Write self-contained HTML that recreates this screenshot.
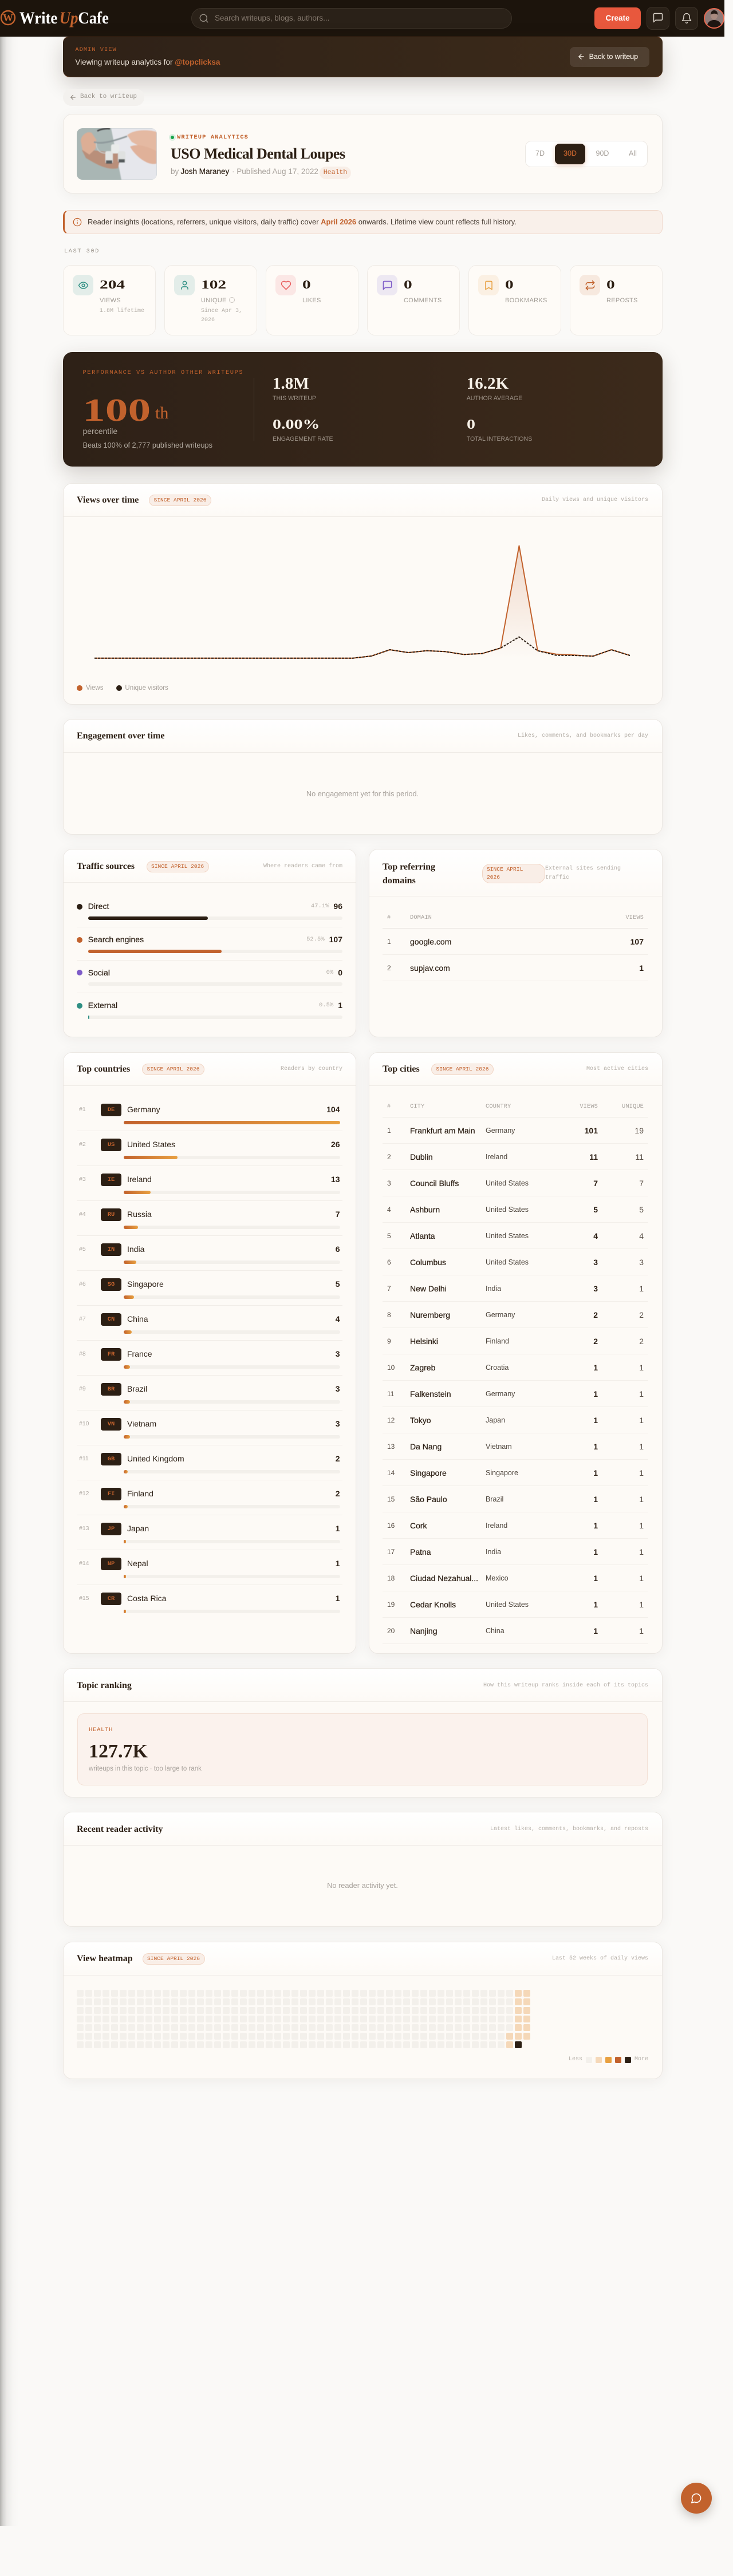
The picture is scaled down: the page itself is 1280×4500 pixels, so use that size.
<!DOCTYPE html>
<html lang="en"><head><meta charset="utf-8"><title>Writeup analytics</title>
<style>
*{box-sizing:border-box}
html,body{margin:0;padding:0;background:#faf9f7}
body{width:1280px;height:4500px;overflow:hidden;font-family:"Liberation Sans",sans-serif;color:#2c1f14}
#p{position:relative;width:1280px;height:4500px;overflow:hidden;background:#faf9f7}
.t{position:absolute;white-space:nowrap;line-height:20px}
.m{font-family:"Liberation Mono",monospace}
.s{font-family:"Liberation Serif",serif}
.abs{position:absolute}
.card{position:absolute;background:#fdfaf6;border:1px solid #ebe7e2;border-radius:16px;box-shadow:0 4px 24px rgba(44,31,20,.06);overflow:hidden}
.hd{position:absolute;left:0;right:0;top:0;height:58px;border-bottom:1px solid #efebe6;background:linear-gradient(#fff,#fdfaf6)}
.ti{position:absolute;white-space:nowrap;line-height:20px;font:700 16px/20px "Liberation Serif",serif;color:#2c1f14}
.bd{position:absolute;height:20px;width:109px;border:1px solid #f1d5c4;background:#f9eee7;border-radius:10px;color:#c2622d;font:9.6px/18px "Liberation Mono",monospace;text-align:center;white-space:nowrap}
.su{position:absolute;white-space:nowrap;font:10px/20px "Liberation Mono",monospace;color:#b5afa8}
.st{position:absolute;top:463px;width:162px;height:123px;background:#fefbf7;border:1px solid #efebe6;border-radius:14px}
.ib{position:absolute;left:16px;top:16px;width:36px;height:36px;border-radius:10px;display:flex;align-items:center;justify-content:center}
.n{position:absolute;left:63px;top:21px;font:700 21px/24px "Liberation Serif",serif;transform:scaleX(1.4);transform-origin:left;color:#2c1f14}
.l{position:absolute;left:63px;top:51px;font:11px/20px "Liberation Sans",sans-serif;letter-spacing:.3px;color:#a39d96;white-space:nowrap}
.x{position:absolute;left:63px;top:72px;font:10px/16px "Liberation Mono",monospace;color:#b5afa8}
.big{font:700 24px/30px "Liberation Serif",serif;color:#f7f1e8;transform-origin:left}
.cap{font-size:10.6px;color:#9c9186}
.tr{position:absolute;left:134px;width:464px}
.bar{position:absolute;left:153.8px;width:444.2px;height:6px;border-radius:3px;background:#f3f0eb}
.bar i{display:block;height:6px;border-radius:3px}
.dot{position:absolute;left:134px;width:10px;height:10px;border-radius:50%}
.sep{position:absolute;left:134px;width:464px;height:1px;background:#f1ede8}
.rv{position:absolute;right:682px;display:flex;gap:8px;align-items:center;line-height:20px;white-space:nowrap}
.rv span{font:10.5px "Liberation Mono",monospace;color:#b5afa8}
.rv b{font-size:14px;color:#2c1f14}
.nm{position:absolute;left:153.8px;font-size:14px;line-height:20px;-webkit-text-stroke:.2px #2c1f14}
table{position:absolute;border-collapse:separate;border-spacing:0;table-layout:fixed;font-size:14px}
th{font:400 10.4px "Liberation Mono",monospace;color:#a8a29c;text-align:left;padding:0 8px;border-bottom:1px solid #e6e2dd;height:37px;letter-spacing:.1px}
td{padding:0 8px;height:46px;border-bottom:1px solid #f3efea;white-space:nowrap;overflow:hidden}
.r{text-align:right}
.i{font-size:12px;color:#5a5047}
.c{-webkit-text-stroke:.25px #2c1f14}
.o{font-size:12.5px;color:#4f463d}
.u{color:#5a5047}
#cr{position:absolute;left:134px;top:1915.3px;width:463.5px}
#cr>div{position:relative;height:61px;border-bottom:1px solid #f1ede8}
#cr u{position:absolute;left:4px;top:13px;font:10.5px/20px "Liberation Sans",sans-serif;color:#b0aaa4;text-decoration:none}
#cr em{position:absolute;left:42px;top:13px;width:36px;height:22px;background:#2c1f14;border-radius:4px;color:#c2622d;font:normal 700 10.5px/22px "Liberation Mono",monospace;text-align:center}
#cr span{position:absolute;left:88px;top:13px;font-size:14px;line-height:20px}
#cr b{position:absolute;right:4px;top:13px;font-size:14px;line-height:20px}
#cr s{position:absolute;left:82px;right:4px;top:43px;height:6px;border-radius:3px;background:#f3f0eb;text-decoration:none;display:block}
#cr s i{display:block;height:6px;border-radius:3px;background:linear-gradient(90deg,#c2622d,#e8a040)}
</style></head><body><div id="p">

<div class="abs" style="left:0;top:64px;width:34px;height:4349px;background:linear-gradient(90deg,rgba(60,58,55,.38) 0,rgba(60,58,55,.2) 5px,rgba(60,58,55,.08) 12px,rgba(60,58,55,.02) 22px,rgba(60,58,55,0) 32px)"></div>

<!-- top bar -->
<div class="abs" style="left:0;top:0;width:1265px;height:64px;background:#1c140c"></div>
<svg class="abs" style="left:0;top:17px" width="29" height="28" viewBox="0 0 29 28"><circle cx="14" cy="14" r="12" fill="none" stroke="#c2622d" stroke-width="2.4"/><text x="14" y="20" text-anchor="middle" font-family="Liberation Serif" font-weight="700" font-size="18" fill="#c2622d">W</text></svg>
<div class="t s" style="left:34px;top:14px;line-height:36px;font-size:30px;font-weight:700;color:#fff;transform:scaleX(.89);transform-origin:left">Write<span style="font-style:italic;color:#c2622d;margin-left:4px">Up</span>Cafe</div>
<div class="abs" style="left:334px;top:14px;width:560px;height:36px;border-radius:18px;background:#2a2118;border:1px solid #3b3228"></div>
<svg class="abs" style="left:347px;top:23px" width="18" height="18" viewBox="0 0 24 24" fill="none" stroke="#9b9389" stroke-width="1.8" stroke-linecap="round"><circle cx="11" cy="11" r="8"/><path d="m21 21-4.3-4.3"/></svg>
<div class="t" style="left:375px;top:22px;font-size:13.5px;color:#85796e">Search writeups, blogs, authors...</div>
<div class="abs" style="left:1038px;top:13px;width:81px;height:38px;border-radius:9px;background:#e8583d;color:#fff;font-weight:700;font-size:13.5px;line-height:37px;text-align:center">Create</div>
<div class="abs" style="left:1129px;top:12px;width:40px;height:40px;border-radius:10px;background:#2a2118;border:1px solid #3b3228"></div>
<svg class="abs" style="left:1139px;top:21px" width="20" height="20" viewBox="0 0 24 24" fill="none" stroke="#d9d2c9" stroke-width="1.8" stroke-linejoin="round"><path d="M21 15a2 2 0 0 1-2 2H7l-4 4V5a2 2 0 0 1 2-2h14a2 2 0 0 1 2 2z"/></svg>
<div class="abs" style="left:1179px;top:12px;width:40px;height:40px;border-radius:10px;background:#2a2118;border:1px solid #3b3228"></div>
<svg class="abs" style="left:1189px;top:22px" width="20" height="20" viewBox="0 0 24 24" fill="none" stroke="#d9d2c9" stroke-width="1.8" stroke-linecap="round" stroke-linejoin="round"><path d="M6 8a6 6 0 0 1 12 0c0 7 3 9 3 9H3s3-2 3-9"/><path d="M10.3 21a1.94 1.94 0 0 0 3.4 0"/></svg>
<svg class="abs" style="left:1229px;top:14px" width="36" height="36" viewBox="0 0 36 36"><circle cx="18" cy="18" r="17" fill="#8f7b78"/><path d="M5 34c1-10 7-13 13-13s12 3 14 13z" fill="#1e1512"/><ellipse cx="18" cy="13" rx="6" ry="7" fill="#a98a80"/><path d="M12 12c0-6 3-8 6-8s7 2 6 8c-2-3-9-3-12 0z" fill="#241915"/><circle cx="18" cy="18" r="17" fill="none" stroke="#e8684f" stroke-width="2"/></svg>

<!-- admin banner -->
<div class="abs" style="left:110px;top:64px;width:1047px;height:71px;border-radius:0 0 12px 12px;border-top-left-radius:10px;border-top-right-radius:10px;background:linear-gradient(90deg,#2e2117,#3d2b1a);border:1px solid #6b3c1f;border-width:1px 0;box-shadow:0 12px 36px rgba(44,31,20,.2)"></div>
<div class="t m" style="left:131.4px;top:77px;font-size:10.4px;letter-spacing:1px;color:#c2622d">ADMIN VIEW</div>
<div class="t" style="left:131.4px;top:99px;font-size:13.5px;color:#e8dfd4">Viewing writeup analytics for <b style="color:#c2622d">@topclicksa</b></div>
<div class="abs" style="left:995px;top:82px;width:139px;height:35px;border-radius:8px;background:rgba(255,255,255,.1)"></div>
<svg class="abs" style="left:1008px;top:92px" width="14" height="14" viewBox="0 0 24 24" fill="none" stroke="#f0e8dd" stroke-width="2.4" stroke-linecap="round" stroke-linejoin="round"><path d="m12 19-7-7 7-7"/><path d="M19 12H5"/></svg>
<div class="t" style="left:1028.6px;top:89px;font-size:12.5px;color:#f0e8dd;-webkit-text-stroke:.2px #f0e8dd">Back to writeup</div>

<!-- back pill -->
<div class="abs" style="left:110px;top:155px;width:142px;height:30px;border-radius:15px;background:#f3f1ee"></div>
<svg class="abs" style="left:121px;top:163px" width="13" height="14" viewBox="0 0 24 24" fill="none" stroke="#8f8880" stroke-width="2.2" stroke-linecap="round" stroke-linejoin="round"><path d="m12 19-7-7 7-7"/><path d="M19 12H5"/></svg>
<div class="t m" style="left:140px;top:159px;font-size:11px;color:#9e9890">Back to writeup</div>

<!-- hero -->
<div class="abs" style="left:110px;top:199px;width:1047px;height:139px;background:#fdfaf6;border:1px solid #ebe7e2;border-radius:16px;box-shadow:0 4px 24px rgba(44,31,20,.05)"></div>
<svg class="abs" style="left:134px;top:224px;border-radius:10px" width="140" height="90" viewBox="0 0 140 90">
<defs><filter id="bl"><feGaussianBlur stdDeviation=".7"/></filter></defs>
<rect width="140" height="90" fill="#a9b6b4"/>
<g filter="url(#bl)">
<path d="M60 0H140V90H78Z" fill="#e6e7ec"/>
<path d="M9 38C22 36 50 42 78 44L72 70C50 74 30 60 16 52Z" fill="#b98f7a"/>
<path d="M7 22C8 12 18 4 26 8L34 20 33 36 22 46 10 38Z" fill="#dcae95"/>
<path d="M88 12C100 2 122 2 139 6V42L118 36 96 24Z" fill="#e4b9a2"/>
<path d="M93 32C105 26 125 32 139 40V62C122 66 100 46 93 32Z" fill="#e0b199"/>
<path d="M30 24C42 28 60 24 88 14" fill="none" stroke="#8f9a9c" stroke-width="3"/>
<path d="M36 5C40 2 50 0 58 1" fill="none" stroke="#3c3d40" stroke-width="2.5"/>
<path d="M34 26C34 42 46 46 58 42" fill="none" stroke="#c9d0d0" stroke-width="1.5"/>
<rect x="60" y="28" width="14" height="16" rx="3" fill="#e9ebea"/>
<rect x="50" y="40" width="13" height="22" rx="3" fill="#e3e5e4"/>
<rect x="72" y="40" width="13" height="20" rx="3" fill="#dfe1e0"/>
<rect x="51" y="56" width="11" height="6" fill="#555a5c"/>
<rect x="73" y="54" width="11" height="6" fill="#555a5c"/>
</g></svg>
<div class="abs" style="left:295px;top:234px;width:12px;height:12px;border-radius:50%;background:#dcefe0"></div>
<div class="abs" style="left:298px;top:237px;width:6px;height:6px;border-radius:50%;background:#16a34a"></div>
<div class="t m" style="left:309px;top:230px;font-size:10.4px;letter-spacing:1.12px;font-weight:700;color:#c2622d">WRITEUP ANALYTICS</div>
<div class="t s" style="left:298px;top:254px;line-height:30px;font-size:26px;font-weight:700;letter-spacing:-.5px;color:#2c1f14">USO Medical Dental Loupes</div>
<div class="t" style="left:298px;top:290px;font-size:13.5px;color:#a8a29c">by</div>
<div class="t" style="left:315.5px;top:290px;font-size:13.5px;color:#2c1f14;-webkit-text-stroke:.2px #2c1f14">Josh Maraney</div>
<div class="t" style="left:405px;top:290px;font-size:13.5px;color:#a8a29c">· Published Aug 17, 2022 ·</div>
<div class="abs m" style="left:558px;top:291px;width:55px;height:22px;border-radius:11px;background:#f8eee7;color:#c2622d;font-size:11.5px;line-height:22px;text-align:center">Health</div>

<div class="abs" style="left:916.7px;top:246px;width:214.3px;height:45.5px;background:#fff;border:1px solid #ece8e3;border-radius:11px"></div>
<div class="abs" style="left:969px;top:251px;width:53px;height:36px;background:#2c1f14;border-radius:8px;box-shadow:0 2px 8px rgba(194,98,45,.3)"></div>
<div class="t" style="left:923px;top:258px;width:40px;text-align:center;font-size:12.5px;color:#a8a29c">7D</div>
<div class="t" style="left:969px;top:258px;width:53px;text-align:center;font-size:12.5px;color:#c2622d;-webkit-text-stroke:.2px #c2622d">30D</div>
<div class="t" style="left:1032px;top:258px;width:40px;text-align:center;font-size:12.5px;color:#a8a29c">90D</div>
<div class="t" style="left:1085px;top:258px;width:40px;text-align:center;font-size:12.5px;color:#a8a29c">All</div>

<!-- notice -->
<div class="abs" style="left:110px;top:367px;width:1047px;height:42px;background:#f9f0ea;border:1px solid #f0d8cb;border-left:3px solid #c2622d;border-radius:10px"></div>
<svg class="abs" style="left:127px;top:380px" width="16" height="16" viewBox="0 0 24 24" fill="none" stroke="#c2622d" stroke-width="1.9" stroke-linecap="round"><circle cx="12" cy="12" r="10"/><path d="M12 16v-4"/><path d="M12 8h.01"/></svg>
<div class="t" style="left:153px;top:378px;font-size:13px;letter-spacing:-.02px;color:#4a3f36">Reader insights (locations, referrers, unique visitors, daily traffic) cover <b style="color:#c2622d">April 2026</b> onwards. Lifetime view count reflects full history.</div>

<div class="t m" style="left:112px;top:429px;font-size:10.4px;letter-spacing:1.5px;color:#a09a92">LAST 30D</div>

<!-- stats -->
<div class="st" style="left:110px"><div class="ib" style="background:#e3ede9"><svg width="19" height="19" viewBox="0 0 24 24" fill="none" stroke="#2f8f83" stroke-width="1.9"><path d="M2 12s3-7 10-7 10 7 10 7-3 7-10 7-10-7-10-7Z"/><circle cx="12" cy="12" r="3"/></svg></div><div class="n">204</div><div class="l">VIEWS</div><div class="x">1.8M lifetime</div></div>
<div class="st" style="left:287px"><div class="ib" style="background:#e3ede9"><svg width="19" height="19" viewBox="0 0 24 24" fill="none" stroke="#2f8f83" stroke-width="1.9"><path d="M19 21v-2a4 4 0 0 0-4-4H9a4 4 0 0 0-4 4v2"/><circle cx="12" cy="7" r="4"/></svg></div><div class="n">102</div><div class="l">UNIQUE <span style="display:inline-block;width:10px;height:10px;border:1px solid #c9c4be;border-radius:50%;vertical-align:-1px;margin-left:1px"></span></div><div class="x">Since Apr 3,<br>2026</div></div>
<div class="st" style="left:464px"><div class="ib" style="background:#fbe7e5"><svg width="19" height="19" viewBox="0 0 24 24" fill="none" stroke="#e85a5a" stroke-width="1.9" stroke-linejoin="round"><path d="M19 14c1.49-1.46 3-3.21 3-5.5A5.5 5.5 0 0 0 16.5 3c-1.76 0-3 .5-4.5 2-1.5-1.5-2.74-2-4.5-2A5.5 5.5 0 0 0 2 8.5c0 2.3 1.5 4.05 3 5.5l7 7Z"/></svg></div><div class="n">0</div><div class="l">LIKES</div></div>
<div class="st" style="left:641px"><div class="ib" style="background:#ede8f2"><svg width="19" height="19" viewBox="0 0 24 24" fill="none" stroke="#7e5cc8" stroke-width="1.9" stroke-linejoin="round"><path d="M21 15a2 2 0 0 1-2 2H7l-4 4V5a2 2 0 0 1 2-2h14a2 2 0 0 1 2 2z"/></svg></div><div class="n">0</div><div class="l">COMMENTS</div></div>
<div class="st" style="left:818px"><div class="ib" style="background:#fbf0e3"><svg width="19" height="19" viewBox="0 0 24 24" fill="none" stroke="#e8a040" stroke-width="1.9" stroke-linejoin="round"><path d="m19 21-7-4-7 4V5a2 2 0 0 1 2-2h10a2 2 0 0 1 2 2v16z"/></svg></div><div class="n">0</div><div class="l">BOOKMARKS</div></div>
<div class="st" style="left:995px"><div class="ib" style="background:#f7e9df"><svg width="19" height="19" viewBox="0 0 24 24" fill="none" stroke="#c2622d" stroke-width="1.9" stroke-linecap="round" stroke-linejoin="round"><path d="m17 2 4 4-4 4"/><path d="M3 11v-1a4 4 0 0 1 4-4h14"/><path d="m7 22-4-4 4-4"/><path d="M21 13v1a4 4 0 0 1-4 4H3"/></svg></div><div class="n">0</div><div class="l">REPOSTS</div></div>

<!-- performance panel -->
<div class="abs" style="left:110px;top:615px;width:1047px;height:200px;border-radius:16px;background:linear-gradient(90deg,#2e2117,#3c2a1b);box-shadow:0 12px 36px rgba(44,31,20,.2)"></div>
<div class="t m" style="left:144.5px;top:641px;font-size:10.4px;letter-spacing:1.56px;color:#c2622d">PERFORMANCE VS AUTHOR OTHER WRITEUPS</div>
<div class="t s" style="left:144px;top:682px;line-height:70px;font-size:56px;font-weight:700;color:#c2622d;transform:scaleX(1.42);transform-origin:left">100</div>
<div class="t s" style="left:271px;top:704px;line-height:36px;font-size:30px;color:#c2622d">th</div>
<div class="t" style="left:144.5px;top:743px;font-size:14px;color:#b3aba1">percentile</div>
<div class="t" style="left:144.5px;top:768px;font-size:12.7px;color:#b3aba1">Beats 100% of 2,777 published writeups</div>
<div class="abs" style="left:443px;top:660px;width:1px;height:110px;background:rgba(255,255,255,.14)"></div>
<div class="t big" style="left:476px;top:655px;font-size:29px">1.8M</div>
<div class="t cap" style="left:476px;top:686px">THIS WRITEUP</div>
<div class="t big" style="left:476px;top:727px;transform:scaleX(1.25)">0.00%</div>
<div class="t cap" style="left:476px;top:757px">ENGAGEMENT RATE</div>
<div class="t big" style="left:814.7px;top:655px;font-size:29px">16.2K</div>
<div class="t cap" style="left:814.7px;top:686px">AUTHOR AVERAGE</div>
<div class="t big" style="left:814.7px;top:727px;transform:scaleX(1.25)">0</div>
<div class="t cap" style="left:814.7px;top:757px">TOTAL INTERACTIONS</div>

<!-- views over time -->
<div class="card" style="left:110px;top:844px;width:1046.5px;height:387px"><div class="hd"></div></div>
<div class="ti" style="left:134px;top:864px">Views over time</div>
<div class="bd" style="left:260px;top:864px">SINCE APRIL 2026</div>
<div class="su" style="right:148px;top:864px">Daily views and unique visitors</div>
<svg class="abs" style="left:110px;top:900px" width="1047" height="280" viewBox="110 900 1047 280">
<defs><linearGradient id="ar" gradientUnits="userSpaceOnUse" x1="0" y1="953" x2="0" y2="1150"><stop offset="0" stop-color="#c2622d" stop-opacity=".22"/><stop offset="1" stop-color="#c2622d" stop-opacity="0"/></linearGradient></defs>
<polygon fill="url(#ar)" points="165,1150 616.4,1149.7 648.6,1146 680.8,1135 713.1,1140 745.3,1136.7 777.6,1138.3 809.8,1143.3 842,1141.7 874.3,1132 906.5,953.3 938.8,1136.7 971,1142.7 1003.2,1144.3 1035.5,1146.3 1067.7,1135 1100,1145 1100,1150"/>
<polyline fill="none" stroke="#c2622d" stroke-width="2" stroke-linejoin="round" points="165,1149.7 616.4,1149.7 648.6,1146 680.8,1135 713.1,1140 745.3,1136.7 777.6,1138.3 809.8,1143.3 842,1141.7 874.3,1132 906.5,953.3 938.8,1136.7 971,1142.7 1003.2,1144.3 1035.5,1146.3 1067.7,1135 1100,1145"/>
<polyline fill="none" stroke="#2c1f14" stroke-width="2" stroke-dasharray="4 2" points="165,1149.7 616.4,1149.7 648.6,1146 680.8,1135 713.1,1140 745.3,1136.7 777.6,1138.3 809.8,1143.3 842,1141.7 874.3,1132 906.5,1112.7 938.8,1136.7 971,1144.7 1003.2,1145 1035.5,1146.3 1067.7,1135 1100,1145"/>
</svg>
<div class="abs" style="left:134px;top:1197px;width:10px;height:10px;border-radius:50%;background:#c2622d"></div>
<div class="t" style="left:150px;top:1192px;font-size:11.5px;color:#a8a29c">Views</div>
<div class="abs" style="left:203px;top:1197px;width:10px;height:10px;border-radius:50%;background:#2c1f14"></div>
<div class="t" style="left:218.4px;top:1192px;font-size:11.5px;color:#a8a29c">Unique visitors</div>

<!-- engagement -->
<div class="card" style="left:110px;top:1256px;width:1046.5px;height:202px"><div class="hd"></div></div>
<div class="ti" style="left:134px;top:1276px">Engagement over time</div>
<div class="su" style="right:148px;top:1276px">Likes, comments, and bookmarks per day</div>
<div class="t" style="left:110px;width:1046px;text-align:center;top:1377px;font-size:12.8px;color:#a8a29c">No engagement yet for this period.</div>

<!-- traffic -->
<div class="card" style="left:110px;top:1483px;width:511.7px;height:329px"><div class="hd"></div></div>
<div class="ti" style="left:134px;top:1504px">Traffic sources</div>
<div class="bd" style="left:255.6px;top:1504px">SINCE APRIL 2026</div>
<div class="su" style="right:682px;top:1504px">Where readers came from</div>
<div class="dot" style="top:1579px;background:#2c1f14"></div><div class="nm" style="top:1573px">Direct</div><div class="rv" style="top:1573px"><span>47.1%</span><b>96</b></div>
<div class="bar" style="top:1601px"><i style="width:47.1%;background:#2c1f14"></i></div><div class="sep" style="top:1619px"></div>
<div class="dot" style="top:1637px;background:#c2622d"></div><div class="nm" style="top:1631px">Search engines</div><div class="rv" style="top:1631px"><span>52.5%</span><b>107</b></div>
<div class="bar" style="top:1659px"><i style="width:52.5%;background:#c2622d"></i></div><div class="sep" style="top:1677px"></div>
<div class="dot" style="top:1694px;background:#7e5cc8"></div><div class="nm" style="top:1689px">Social</div><div class="rv" style="top:1689px"><span>0%</span><b>0</b></div>
<div class="bar" style="top:1716px"></div><div class="sep" style="top:1734px"></div>
<div class="dot" style="top:1752px;background:#2f8f83"></div><div class="nm" style="top:1746px">External</div><div class="rv" style="top:1746px"><span>0.5%</span><b>1</b></div>
<div class="bar" style="top:1774px"><i style="width:.5%;background:#2f8f83"></i></div>

<!-- referrers -->
<div class="card" style="left:644px;top:1483px;width:512.5px;height:329px"><div class="hd" style="height:82px"></div></div>
<div class="t s" style="left:668px;top:1503px;font-size:16px;font-weight:700;line-height:24px;color:#2c1f14">Top referring<br>domains</div>
<div class="abs m" style="left:842px;top:1509px;width:110px;height:34px;border:1px solid #f1d5c4;background:#f9eee7;border-radius:14px;color:#c2622d;font-size:9.6px;line-height:14px;padding:2px 7px">SINCE APRIL<br>2026</div>
<div class="abs m" style="left:952px;top:1510px;font-size:10px;line-height:16px;color:#b5afa8;white-space:nowrap">External sites sending<br>traffic</div>
<table style="left:668px;top:1585px;width:464px"><colgroup><col style="width:40px"><col><col style="width:80px"></colgroup>
<tr><th>#</th><th>DOMAIN</th><th class="r">VIEWS</th></tr>
<tr><td class="i">1</td><td style="-webkit-text-stroke:.2px #2c1f14">google.com</td><td class="r"><b>107</b></td></tr>
<tr><td class="i">2</td><td style="-webkit-text-stroke:.2px #2c1f14">supjav.com</td><td class="r"><b>1</b></td></tr>
</table>

<!-- countries -->
<div class="card" style="left:110px;top:1838px;width:511.7px;height:1051px"><div class="hd"></div></div>
<div class="ti" style="left:134px;top:1858px">Top countries</div>
<div class="bd" style="left:248px;top:1858px">SINCE APRIL 2026</div>
<div class="su" style="right:682px;top:1858px">Readers by country</div>
<div id="cr">
<div><u>#1</u><em>DE</em><span>Germany</span><b>104</b><s><i style="width:100%"></i></s></div>
<div><u>#2</u><em>US</em><span>United States</span><b>26</b><s><i style="width:25%"></i></s></div>
<div><u>#3</u><em>IE</em><span>Ireland</span><b>13</b><s><i style="width:12.5%"></i></s></div>
<div><u>#4</u><em>RU</em><span>Russia</span><b>7</b><s><i style="width:6.7%"></i></s></div>
<div><u>#5</u><em>IN</em><span>India</span><b>6</b><s><i style="width:5.8%"></i></s></div>
<div><u>#6</u><em>SG</em><span>Singapore</span><b>5</b><s><i style="width:4.8%"></i></s></div>
<div><u>#7</u><em>CN</em><span>China</span><b>4</b><s><i style="width:3.8%"></i></s></div>
<div><u>#8</u><em>FR</em><span>France</span><b>3</b><s><i style="width:2.9%"></i></s></div>
<div><u>#9</u><em>BR</em><span>Brazil</span><b>3</b><s><i style="width:2.9%"></i></s></div>
<div><u>#10</u><em>VN</em><span>Vietnam</span><b>3</b><s><i style="width:2.9%"></i></s></div>
<div><u>#11</u><em>GB</em><span>United Kingdom</span><b>2</b><s><i style="width:1.9%"></i></s></div>
<div><u>#12</u><em>FI</em><span>Finland</span><b>2</b><s><i style="width:1.9%"></i></s></div>
<div><u>#13</u><em>JP</em><span>Japan</span><b>1</b><s><i style="width:1%"></i></s></div>
<div><u>#14</u><em>NP</em><span>Nepal</span><b>1</b><s><i style="width:1%"></i></s></div>
<div style="border:0"><u>#15</u><em>CR</em><span>Costa Rica</span><b>1</b><s><i style="width:1%"></i></s></div>
</div>

<!-- cities -->
<div class="card" style="left:644px;top:1838px;width:512.5px;height:1051px"><div class="hd"></div></div>
<div class="ti" style="left:668px;top:1858px">Top cities</div>
<div class="bd" style="left:753px;top:1858px">SINCE APRIL 2026</div>
<div class="su" style="right:148px;top:1858px">Most active cities</div>
<table style="left:668px;top:1915.3px;width:464px"><colgroup><col style="width:40px"><col style="width:132px"><col style="width:120px"><col style="width:92px"><col style="width:80px"></colgroup>
<tr><th>#</th><th>CITY</th><th>COUNTRY</th><th class="r">VIEWS</th><th class="r">UNIQUE</th></tr>
<tr><td class="i">1</td><td class="c">Frankfurt am Main</td><td class="o">Germany</td><td class="r"><b>101</b></td><td class="r u">19</td></tr>
<tr><td class="i">2</td><td class="c">Dublin</td><td class="o">Ireland</td><td class="r"><b>11</b></td><td class="r u">11</td></tr>
<tr><td class="i">3</td><td class="c">Council Bluffs</td><td class="o">United States</td><td class="r"><b>7</b></td><td class="r u">7</td></tr>
<tr><td class="i">4</td><td class="c">Ashburn</td><td class="o">United States</td><td class="r"><b>5</b></td><td class="r u">5</td></tr>
<tr><td class="i">5</td><td class="c">Atlanta</td><td class="o">United States</td><td class="r"><b>4</b></td><td class="r u">4</td></tr>
<tr><td class="i">6</td><td class="c">Columbus</td><td class="o">United States</td><td class="r"><b>3</b></td><td class="r u">3</td></tr>
<tr><td class="i">7</td><td class="c">New Delhi</td><td class="o">India</td><td class="r"><b>3</b></td><td class="r u">1</td></tr>
<tr><td class="i">8</td><td class="c">Nuremberg</td><td class="o">Germany</td><td class="r"><b>2</b></td><td class="r u">2</td></tr>
<tr><td class="i">9</td><td class="c">Helsinki</td><td class="o">Finland</td><td class="r"><b>2</b></td><td class="r u">2</td></tr>
<tr><td class="i">10</td><td class="c">Zagreb</td><td class="o">Croatia</td><td class="r"><b>1</b></td><td class="r u">1</td></tr>
<tr><td class="i">11</td><td class="c">Falkenstein</td><td class="o">Germany</td><td class="r"><b>1</b></td><td class="r u">1</td></tr>
<tr><td class="i">12</td><td class="c">Tokyo</td><td class="o">Japan</td><td class="r"><b>1</b></td><td class="r u">1</td></tr>
<tr><td class="i">13</td><td class="c">Da Nang</td><td class="o">Vietnam</td><td class="r"><b>1</b></td><td class="r u">1</td></tr>
<tr><td class="i">14</td><td class="c">Singapore</td><td class="o">Singapore</td><td class="r"><b>1</b></td><td class="r u">1</td></tr>
<tr><td class="i">15</td><td class="c">São Paulo</td><td class="o">Brazil</td><td class="r"><b>1</b></td><td class="r u">1</td></tr>
<tr><td class="i">16</td><td class="c">Cork</td><td class="o">Ireland</td><td class="r"><b>1</b></td><td class="r u">1</td></tr>
<tr><td class="i">17</td><td class="c">Patna</td><td class="o">India</td><td class="r"><b>1</b></td><td class="r u">1</td></tr>
<tr><td class="i">18</td><td class="c">Ciudad Nezahual...</td><td class="o">Mexico</td><td class="r"><b>1</b></td><td class="r u">1</td></tr>
<tr><td class="i">19</td><td class="c">Cedar Knolls</td><td class="o">United States</td><td class="r"><b>1</b></td><td class="r u">1</td></tr>
<tr><td class="i">20</td><td class="c">Nanjing</td><td class="o">China</td><td class="r"><b>1</b></td><td class="r u">1</td></tr>
</table>

<!-- topic ranking -->
<div class="card" style="left:110px;top:2914px;width:1046.5px;height:226px"><div class="hd"></div></div>
<div class="ti" style="left:134px;top:2935px">Topic ranking</div>
<div class="su" style="right:148px;top:2935px">How this writeup ranks inside each of its topics</div>
<div class="abs" style="left:135px;top:2993px;width:996px;height:126px;background:#fbf2ed;border:1px solid #f3e0d6;border-radius:12px"></div>
<div class="t m" style="left:155px;top:3012px;font-size:10.4px;letter-spacing:.8px;color:#c2622d">HEALTH</div>
<div class="t s" style="left:155px;top:3040px;line-height:40px;font-size:34px;font-weight:700;color:#2c1f14">127.7K</div>
<div class="t" style="left:155px;top:3080px;font-size:11.5px;color:#a8a29c">writeups in this topic · too large to rank</div>

<!-- recent -->
<div class="card" style="left:110px;top:3165px;width:1046.5px;height:201px"><div class="hd"></div></div>
<div class="ti" style="left:134px;top:3186px">Recent reader activity</div>
<div class="su" style="right:148px;top:3186px">Latest likes, comments, bookmarks, and reposts</div>
<div class="t" style="left:110px;width:1046px;text-align:center;top:3284px;font-size:12.8px;color:#a8a29c">No reader activity yet.</div>

<!-- heatmap -->
<div class="card" style="left:110px;top:3391.5px;width:1046.5px;height:240.5px"><div class="hd"></div></div>
<div class="ti" style="left:134px;top:3412px">View heatmap</div>
<div class="bd" style="left:248.5px;top:3412px">SINCE APRIL 2026</div>
<div class="su" style="right:148px;top:3412px">Last 52 weeks of daily views</div>
<svg class="abs" style="left:134px;top:3476px" width="795" height="105" viewBox="0 0 795 105">
<defs><pattern id="hm" width="15" height="15" patternUnits="userSpaceOnUse"><rect width="12" height="12" rx="2" fill="#f3f0eb"/></pattern></defs>
<rect width="795" height="105" fill="url(#hm)"/>
<rect x="780" y="90" width="15" height="15" fill="#fdfaf6"/>
<g fill="#f5d8b8"><rect x="765" y="0" width="12" height="12" rx="2"/><rect x="780" y="0" width="12" height="12" rx="2"/><rect x="765" y="15" width="12" height="12" rx="2"/><rect x="780" y="15" width="12" height="12" rx="2"/><rect x="765" y="30" width="12" height="12" rx="2"/><rect x="780" y="30" width="12" height="12" rx="2"/><rect x="765" y="45" width="12" height="12" rx="2"/><rect x="780" y="45" width="12" height="12" rx="2"/><rect x="765" y="60" width="12" height="12" rx="2"/><rect x="780" y="60" width="12" height="12" rx="2"/><rect x="750" y="75" width="12" height="12" rx="2"/><rect x="765" y="75" width="12" height="12" rx="2"/><rect x="780" y="75" width="12" height="12" rx="2"/><rect x="750" y="90" width="12" height="12" rx="2"/></g>
<rect x="765" y="90" width="12" height="12" rx="2" fill="#2c1f14"/>
</svg>
<div class="t m" style="left:993px;top:3588px;font-size:10px;color:#b5afa8">Less</div>
<div class="abs" style="left:1023px;top:3593px;width:11px;height:11px;border-radius:2px;background:#f3f0eb"></div>
<div class="abs" style="left:1040px;top:3593px;width:11px;height:11px;border-radius:2px;background:#f5d8b8"></div>
<div class="abs" style="left:1057px;top:3593px;width:11px;height:11px;border-radius:2px;background:#e8a040"></div>
<div class="abs" style="left:1074px;top:3593px;width:11px;height:11px;border-radius:2px;background:#c2622d"></div>
<div class="abs" style="left:1091px;top:3593px;width:11px;height:11px;border-radius:2px;background:#2c1f14"></div>
<div class="t m" style="left:1108px;top:3588px;font-size:10px;color:#b5afa8">More</div>

<!-- fab -->
<div class="abs" style="left:1189px;top:4337px;width:54px;height:54px;border-radius:50%;background:#c2622d;box-shadow:0 6px 18px rgba(44,31,20,.25)"></div>
<svg class="abs" style="left:1206px;top:4354px" width="20" height="20" viewBox="0 0 24 24" fill="none" stroke="#fff" stroke-width="2" stroke-linejoin="round"><path d="M7.9 20A9 9 0 1 0 4 16.1L2 22Z"/></svg>
</div></body></html>
